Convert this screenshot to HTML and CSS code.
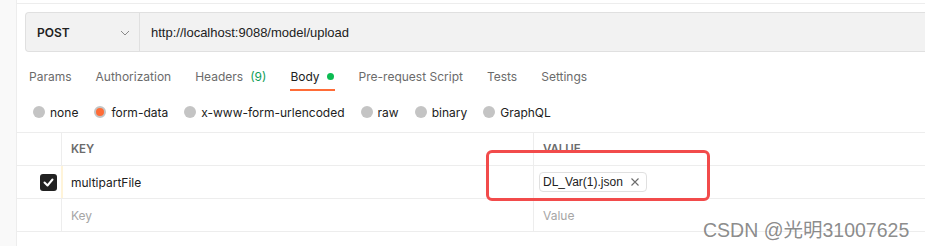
FILE: index.html
```html
<!DOCTYPE html>
<html lang="en">

<head>
    <meta charset="UTF-8">
    <title>Request - Body</title>
    <link rel="stylesheet" href="styles.css">
</head>

<body>

    <!-- Left strip -->
    <div class="sidebar"></div>

    <!-- Request area -->
    <div class="main">
        <div class="top-line"></div>

        <!-- URL bar -->
        <div class="url-bar">
            <div class="method">
                <span>POST</span>
                <svg class="chevron" width="10" height="6" viewBox="0 0 10 6">
                    <path d="M1 1l4 4 4-4" fill="none" stroke="#8a8a8a" stroke-width="1"/>
                </svg>
            </div>
            <div class="url">http://localhost:9088/model/upload</div>
        </div>

        <!-- Tabs -->
        <div class="tabs">
            <div class="tab">Params</div>
            <div class="tab">Authorization</div>
            <div class="tab">Headers <span class="count">(9)</span></div>
            <div class="tab active">Body <span class="dot"></span></div>
            <div class="tab">Pre-request Script</div>
            <div class="tab">Tests</div>
            <div class="tab">Settings</div>
        </div>

        <!-- Body types -->
        <div class="body-types">
            <label class="radio"><span class="circle"></span>none</label>
            <label class="radio"><span class="circle checked"></span>form-data</label>
            <label class="radio"><span class="circle"></span>x-www-form-urlencoded</label>
            <label class="radio"><span class="circle"></span>raw</label>
            <label class="radio"><span class="circle"></span>binary</label>
            <label class="radio"><span class="circle"></span>GraphQL</label>
        </div>

        <!-- Params table -->
        <div class="table">
            <div class="row head">
                <div class="cell check"></div>
                <div class="cell key">KEY</div>
                <div class="cell value">VALUE</div>
            </div>
            <div class="row">
                <div class="cell check">
                    <span class="checkbox">
                        <svg width="11" height="9" viewBox="0 0 11 9">
                            <path d="M1.5 4.5l3 3 5-6" fill="none" stroke="#fff" stroke-width="2" stroke-linecap="round" stroke-linejoin="round"/>
                        </svg>
                    </span>
                </div>
                <div class="cell key marked">multipartFile</div>
                <div class="cell value">
                    <span class="file-chip">
                        DL_Var(1).json
                        <svg class="remove" width="8" height="8" viewBox="0 0 8 8">
                            <path d="M0.5 0.5l7 7M7.5 0.5l-7 7" stroke="#6b6b6b" stroke-width="1.1"/>
                        </svg>
                    </span>
                </div>
            </div>
            <div class="row">
                <div class="cell check"></div>
                <div class="cell key placeholder">Key</div>
                <div class="cell value placeholder">Value</div>
            </div>
        </div>

        <!-- Annotation on top of the screenshot -->
        <div class="highlight"></div>
        <div class="watermark">CSDN @光明31007625</div>
    </div>

</body>

</html>
```

FILE: styles.css
```css
body {
    margin: 0;
    display: flex;
    height: 246px;
    overflow: hidden;
    font-family: Inter, "Noto Sans", sans-serif;
    font-size: 12px;
    color: #212121;
    background-color: #fff;
}

/* Left strip */
.sidebar {
    width: 16px;
    background-color: #f9f9f9;
    border-right: 1px solid #ededed;
    flex-shrink: 0;
}

/* Main area */
.main {
    flex: 1;
    position: relative;
}

.top-line {
    height: 3px;
    border-bottom: 1px solid #ededed;
}

.url-bar {
    display: flex;
    height: 38px;
    margin: 8px 0 0 8px;
    background-color: #f2f2f2;
    border: 1px solid #e0e0e0;
    border-right: none;
    border-radius: 4px 0 0 4px;
}

.method {
    width: 114px;
    display: flex;
    align-items: center;
    justify-content: space-between;
    padding: 0 9px 0 11px;
    box-sizing: border-box;
    border-right: 1px solid #e0e0e0;
    font-weight: 600;
    font-size: 12px;
}

.chevron {
    margin-top: 1px;
}

.url {
    display: flex;
    align-items: center;
    padding-left: 11px;
    font-family: "Liberation Sans", Arial, sans-serif;
    font-size: 13px;
    color: #212121;
}

/* Tabs */
.tabs {
    display: flex;
    gap: 24px;
    margin: 12px 0 0 12px;
}

.tab {
    height: 25px;
    line-height: 25px;
    border-bottom: 2px solid transparent;
    color: #6b6b6b;
    font-size: 12px;
    display: flex;
    align-items: center;
    gap: 4px;
}

.tab.active {
    color: #212121;
    border-bottom-color: #ff6c37;
}

.count {
    color: #0f9d58;
    margin-left: 3px;
}

.dot {
    width: 7px;
    height: 7px;
    border-radius: 50%;
    background-color: #0cbb52;
    margin: 0 1px 0 3px;
}

/* Body type radios */
.body-types {
    display: flex;
    gap: 16px;
    margin: 10px 0 0 16px;
    height: 22px;
    align-items: center;
}

.radio {
    display: flex;
    align-items: center;
    gap: 5px;
    font-size: 12px;
    color: #212121;
}

.circle {
    width: 12px;
    height: 12px;
    border-radius: 50%;
    background-color: #c4c4c4;
    box-sizing: border-box;
}

.circle.checked {
    background-color: #ff6c37;
    border: 2px solid #c4c4c4;
}

/* Params table */
.table {
    margin-top: 9px;
    border-top: 1px solid #ededed;
}

.row {
    display: flex;
    height: 32px;
    border-bottom: 1px solid #ededed;
}

.cell {
    display: flex;
    align-items: center;
    box-sizing: border-box;
}

.check {
    width: 44px;
    justify-content: flex-end;
    padding-right: 4px;
}

.key {
    width: 472px;
    padding-left: 9px;
    border-left: 1px solid #ededed;
    font-size: 12px;
}

.key.marked {
    border-left: 2px solid #fff4d9;
    padding-left: 8px;
}

.value {
    flex: 1;
    padding-left: 5px;
    border-left: 1px solid #ededed;
}

.head .cell {
    font-weight: 600;
    font-size: 11.5px;
    color: #6b6b6b;
}

.head .value {
    padding-left: 9px;
}

.placeholder {
    color: #a6a6a6;
    font-size: 12px;
}

.value.placeholder {
    padding-left: 9px;
}

.checkbox {
    width: 17px;
    height: 17px;
    border-radius: 3px;
    background-color: #212121;
    display: flex;
    align-items: center;
    justify-content: center;
}

.file-chip {
    display: flex;
    align-items: center;
    gap: 8px;
    height: 18px;
    padding: 0 7px 0 3px;
    border: 1px solid #e0e0e0;
    border-radius: 4px;
    font-family: "Liberation Sans", Arial, sans-serif;
    font-size: 12px;
    color: #212121;
}

/* Red annotation box */
.highlight {
    position: absolute;
    left: 469px;
    top: 150px;
    width: 224px;
    height: 51px;
    box-sizing: border-box;
    border: 3px solid #f24b4b;
    border-radius: 6px;
}

.watermark {
    position: absolute;
    left: 686px;
    top: 214px;
    font-family: "Liberation Sans", "Noto Sans CJK SC", sans-serif;
    font-size: 19.5px;
    color: rgba(110, 110, 110, 0.8);
}
```
